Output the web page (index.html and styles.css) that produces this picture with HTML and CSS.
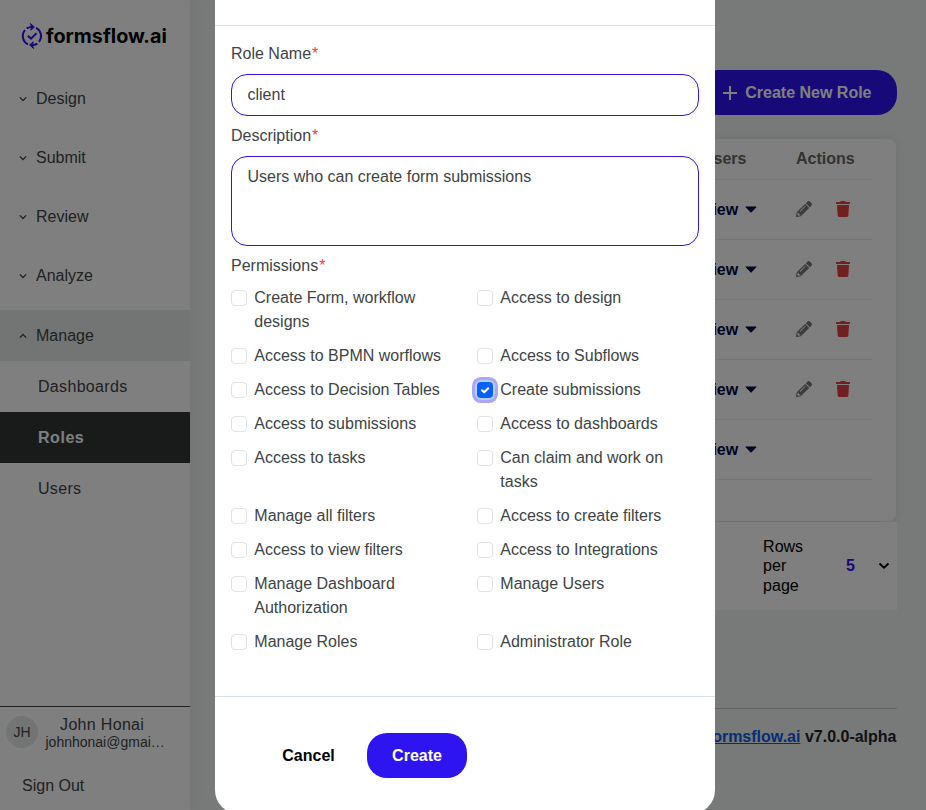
FILE: index.html
```html
<!DOCTYPE html>
<html lang="en">
<head>
<meta charset="utf-8">
<title>Roles</title>
<link rel="stylesheet" href="styles.css">
</head>
<body>
<svg class="defs" aria-hidden="true">
  <symbol id="chev" viewBox="0 0 10 10"><path d="M1.8 3.4 5 6.5 8.2 3.4" fill="none" stroke="currentColor" stroke-width="1.3"/></symbol>
  <symbol id="pencil" viewBox="0 0 512 512"><path fill="currentColor" d="M498 142l-46 46c-5 5-13 5-17 0L324 77c-5-5-5-12 0-17l46-46c19-19 49-19 68 0l60 60c19 19 19 49 0 68zm-214-42L22 362 0 484c-3 16 12 30 28 28l122-22 262-262c5-5 5-13 0-17L301 100c-4-5-12-5-17 0zM124 340c-5-6-5-14 0-20l154-154c6-5 14-5 20 0s5 14 0 20L144 340c-6 5-14 5-20 0zm-36 84h48v36l-64 12-32-32 12-64h36v48z"/></symbol>
  <symbol id="trash" viewBox="0 0 448 512"><path fill="currentColor" d="M432 32H312l-9-19C298 5 290 0 281 0H167c-9 0-18 5-22 13l-9 19H16C7 32 0 39 0 48v32c0 9 7 16 16 16h416c9 0 16-7 16-16V48c0-9-7-16-16-16zM32 128h384l-21 339c-2 25-23 45-48 45H101c-25 0-46-20-48-45z"/></symbol>
</svg>

<div class="app">
  <aside class="sidebar">
    <div class="logo">
      <svg width="22" height="26" viewBox="0 0 22 26" fill="none" stroke="#2e14f0" stroke-width="2">
        <path d="M7 21.4A9.2 9.2 0 0 1 4 7.2"/>
        <path d="M5.6 5.4A9.2 9.2 0 0 1 11 4"/>
        <path d="M15 4.8A9.2 9.2 0 0 1 18 18.8"/>
        <path d="M16.4 20.6A9.2 9.2 0 0 1 11 22"/>
        <path d="M9.4.6 13.4 4 9.8 7.2l.8-3.4z" fill="#2e14f0" stroke-width="1"/>
        <path d="M12.6 25.4 8.6 22l3.6-3.2-.8 3.4z" fill="#2e14f0" stroke-width="1"/>
        <path d="m6.8 12.8 3.2 2.8 5.4-5.4"/>
      </svg>
      <span>formsflow.ai</span>
    </div>
    <nav class="menu">
      <a class="item"><svg><use href="#chev"/></svg>Design</a>
      <a class="item"><svg><use href="#chev"/></svg>Submit</a>
      <a class="item"><svg><use href="#chev"/></svg>Review</a>
      <a class="item"><svg><use href="#chev"/></svg>Analyze</a>
      <a class="item open"><svg><use href="#chev"/></svg>Manage</a>
      <a class="sub">Dashboards</a>
      <a class="sub active">Roles</a>
      <a class="sub">Users</a>
    </nav>
    <div class="account">
      <div class="user">
        <span class="avatar">JH</span>
        <div class="who"><div class="name">John Honai</div><div class="mail">johnhonai@gmai…</div></div>
      </div>
      <a class="signout">Sign Out</a>
    </div>
  </aside>

  <main class="main">
    <button class="new-role"><svg width="14" height="14" viewBox="0 0 14 14"><path d="M7 .5v13M.5 7h13" stroke="#fff" stroke-width="2" stroke-linecap="round"/></svg>Create New Role</button>
    <section class="card">
      <div class="row head"><span class="users">Users</span><span>Actions</span></div>
      <div class="row"><span class="view">View<svg viewBox="0 0 11 6"><path d="M1 .7h9L5.5 5.3z"/></svg></span><span class="acts"><svg class="pen"><use href="#pencil"/></svg><svg class="bin"><use href="#trash"/></svg></span></div>
      <div class="row"><span class="view">View<svg viewBox="0 0 11 6"><path d="M1 .7h9L5.5 5.3z"/></svg></span><span class="acts"><svg class="pen"><use href="#pencil"/></svg><svg class="bin"><use href="#trash"/></svg></span></div>
      <div class="row"><span class="view">View<svg viewBox="0 0 11 6"><path d="M1 .7h9L5.5 5.3z"/></svg></span><span class="acts"><svg class="pen"><use href="#pencil"/></svg><svg class="bin"><use href="#trash"/></svg></span></div>
      <div class="row"><span class="view">View<svg viewBox="0 0 11 6"><path d="M1 .7h9L5.5 5.3z"/></svg></span><span class="acts"><svg class="pen"><use href="#pencil"/></svg><svg class="bin"><use href="#trash"/></svg></span></div>
      <div class="row"><span class="view">View<svg viewBox="0 0 11 6"><path d="M1 .7h9L5.5 5.3z"/></svg></span><span></span></div>
    </section>
    <div class="pager">
      <span class="rows">Rows per page</span><b>5</b>
      <svg width="12" height="8" viewBox="0 0 12 8"><path d="m1.5 1.5 4.5 4.3 4.5-4.3" fill="none" stroke="#000" stroke-width="1.9"/></svg>
    </div>
    <footer class="foot"><a>formsflow.ai</a> v7.0.0-alpha</footer>
  </main>
</div>

<div class="backdrop">
  <div class="modal">
    <div class="modal-head"></div>
    <form class="modal-body">
      <label class="label">Role Name<em>*</em></label>
      <input class="field" type="text" value="client">
      <label class="label">Description<em>*</em></label>
      <textarea class="field area">Users who can create form submissions</textarea>
      <label class="label">Permissions<em>*</em></label>
      <div class="perms">
        <label><span class="box"></span>Create Form, workflow designs</label>
        <label><span class="box"></span>Access to design</label>
        <label><span class="box"></span>Access to BPMN worflows</label>
        <label><span class="box"></span>Access to Subflows</label>
        <label><span class="box"></span>Access to Decision Tables</label>
        <label><span class="box checked"><svg viewBox="0 0 16 16"><path d="m5 8.3 2.2 2 4-4" fill="none" stroke="#fff" stroke-width="2.1" stroke-linecap="round" stroke-linejoin="round"/></svg></span>Create submissions</label>
        <label><span class="box"></span>Access to submissions</label>
        <label><span class="box"></span>Access to dashboards</label>
        <label><span class="box"></span>Access to tasks</label>
        <label><span class="box"></span>Can claim and work on tasks</label>
        <label><span class="box"></span>Manage all filters</label>
        <label><span class="box"></span>Access to create filters</label>
        <label><span class="box"></span>Access to view filters</label>
        <label><span class="box"></span>Access to Integrations</label>
        <label><span class="box"></span>Manage Dashboard Authorization</label>
        <label><span class="box"></span>Manage Users</label>
        <label><span class="box"></span>Manage Roles</label>
        <label><span class="box"></span>Administrator Role</label>
      </div>
    </form>
    <div class="modal-foot">
      <button class="cancel">Cancel</button>
      <button class="create">Create</button>
    </div>
  </div>
</div>
</body>
</html>
```

FILE: styles.css
```css
* { box-sizing: border-box; }
body {
  margin: 0;
  height: 810px;
  overflow: hidden;
  font: 16px/24px "Liberation Sans", Arial, sans-serif;
  color: #404445;
}
button, input, textarea { font: inherit; color: inherit; }
.defs { position: absolute; width: 0; height: 0; }

.app { display: flex; height: 810px; background: #f0f4f2; }

/* Sidebar */
.sidebar {
  width: 190px;
  display: flex;
  flex-direction: column;
  background: #fff;
  box-shadow: 0 0 16px rgba(0, 0, 0, .06);
}
.logo {
  display: flex;
  align-items: center;
  gap: 3px;
  height: 73.2px;
  padding: 0 0 1.5px 21px;
  font: 700 19.8px/26px Inter, sans-serif;
  color: #000;
}
.menu { flex: 1; display: flex; flex-direction: column; }
.item {
  display: flex;
  align-items: center;
  gap: 8px;
  height: 51px;
  margin-bottom: 8.25px;
  padding-left: 18px;
}
.item svg { width: 10px; height: 10px; }
.open { background: #e5ebe8; margin-bottom: 0; }
.open svg { transform: rotate(180deg); }
.sub {
  height: 51px;
  padding-left: 38px;
  line-height: 51px;
  letter-spacing: .32px;
}
.active { background: #323635; color: #fff; font-weight: 700; letter-spacing: .55px; }
.account { height: 104px; border-top: 1px solid #404445; }
.user { display: flex; align-items: center; height: 50px; padding-left: 6px; }
.avatar {
  width: 32px;
  height: 32px;
  border-radius: 50%;
  background: #e5ebe8;
  font-size: 14px;
  line-height: 32px;
  text-align: center;
}
.who { margin: 2px 0 0 7.5px; text-align: center; }
.name { line-height: 18px; letter-spacing: .32px; padding-right: 6px; }
.mail { font-size: 14px; line-height: 17px; }
.signout { display: block; padding: 17px 0 0 22px; }

/* Page content */
.main { flex: 1; display: flex; flex-direction: column; padding: 70px 29px 0 50px; }
.new-role {
  display: flex;
  align-items: center;
  gap: 8px;
  align-self: flex-end;
  height: 45px;
  padding: 0 25.5px;
  border: 0;
  border-radius: 20px;
  background: #2e14f0;
  color: #fff;
  font-weight: 700;
}
.card {
  height: 382px;
  margin: 24px 1px 0 0;
  padding: 0 24px;
  border-radius: 8px;
  background: #fff;
  box-shadow: 0 0 10px rgba(0, 0, 0, .08);
}
.row {
  display: grid;
  grid-template-columns: 94px 76px;
  justify-content: end;
  align-items: center;
  height: 60px;
  border-bottom: 1px solid #ececf0;
}
.head { height: 41px; font-weight: 700; color: #666; }
.view { display: flex; align-items: center; gap: 7px; color: #000b48; font-weight: 700; }
.view svg { width: 12px; height: 7px; fill: #000b48; stroke: #000b48; stroke-linejoin: round; }
.acts { display: flex; align-items: center; gap: 24px; padding-bottom: 2px; }
.pen { width: 16px; height: 16px; color: #777; }
.bin { width: 14px; height: 16px; color: #e53e3e; }
.pager {
  display: flex;
  align-items: center;
  justify-content: flex-end;
  height: 88px;
  margin-top: 1px;
  padding-right: 7px;
  background: #fff;
  color: #000;
}
.rows { width: 48px; line-height: 19.5px; }
.pager b { margin: 0 23px 0 35px; color: #2e14f0; }
.foot {
  margin-top: 98px;
  padding: 16px .5px 0 0;
  border-top: 1px solid #c6c9c8;
  color: #212529;
  font-weight: 700;
  text-align: right;
}
.foot a { color: #0d5bea; text-decoration: underline; }

/* Dialog */
.backdrop {
  position: absolute;
  inset: 0;
  overflow: hidden;
  background: rgba(0, 0, 0, .5);
}
.modal {
  width: 500px;
  height: 814px;
  margin-left: 215px;
  border-radius: 0 0 24px 24px;
  background: #fff;
}
.modal-head { height: 26px; border-bottom: 1px solid #dee2e6; }
.modal-body { height: 670px; padding: 16px 16px 0; }
.label { display: block; height: 24px; }
.label em { margin-left: 1px; color: #f5384b; font-style: normal; }
.field {
  display: block;
  width: 468px;
  height: 42px;
  margin: 8px 0;
  padding: 0 15.5px;
  border: 1px solid #3114ee;
  border-radius: 16px;
  background: #fff;
  outline: 0;
}
.area { height: 90px; padding-top: 8px; resize: none; }
.perms {
  display: grid;
  grid-template-columns: 222px 222px;
  column-gap: 24px;
  row-gap: 10px;
  padding-top: 8px;
}
.perms label { display: flex; gap: 7.3px; }
.box {
  flex: none;
  width: 16px;
  height: 16px;
  margin-top: 4px;
  border: 1px solid #dee2e6;
  border-radius: 4px;
}
.checked {
  border: 0;
  background: #0560fd;
  box-shadow: 0 0 0 2px #b9cdf9, 0 0 0 5px #aaa7fb;
}
.checked svg { display: block; width: 16px; height: 16px; }
.modal-foot {
  display: flex;
  align-items: flex-start;
  padding: 36px 0 0 41px;
  border-top: 1px solid #d9e1e7;
}
.modal-foot button {
  height: 45px;
  padding: 0;
  border: 0;
  border-radius: 20px;
  font-weight: 700;
}
.cancel { width: 105px; background: none; color: #000; }
.create { width: 100px; margin-left: 6px; background: #2e14f0; }
.modal-foot .create { color: #fff; }
```
